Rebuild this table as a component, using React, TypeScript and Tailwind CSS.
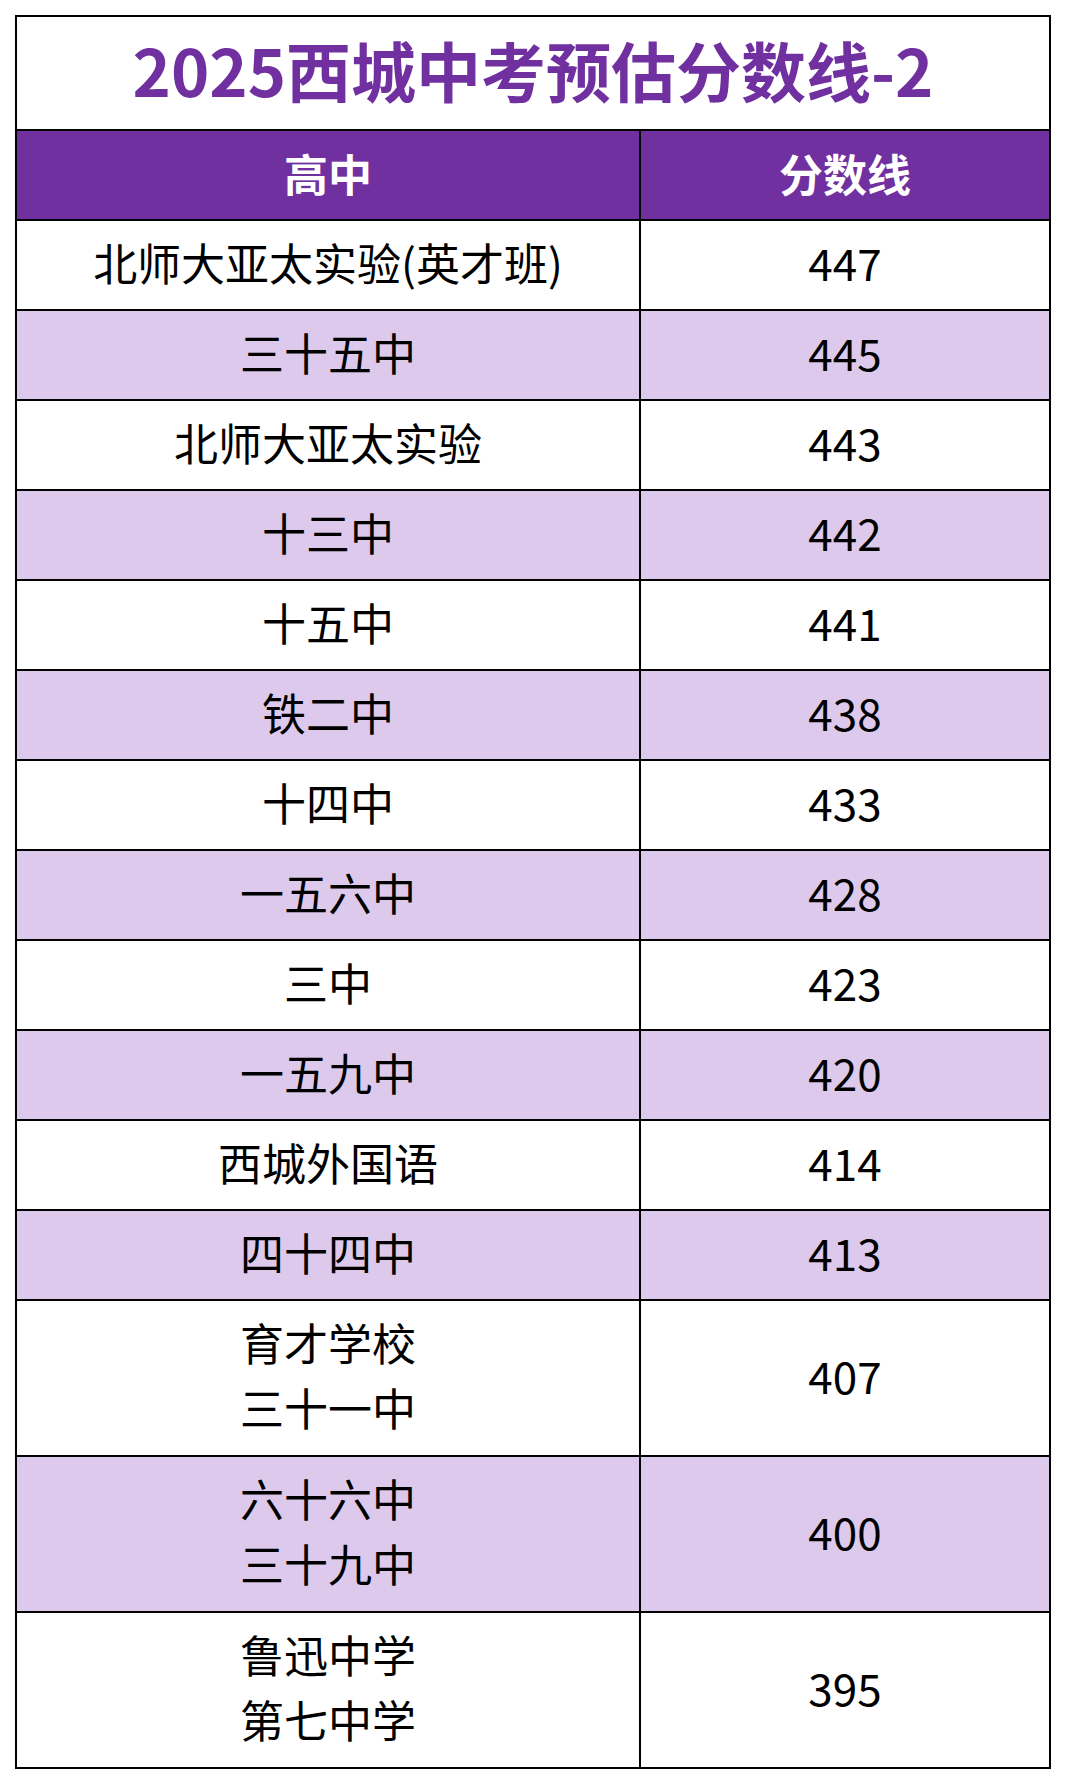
import React from 'react';

type Row = { names: string[]; score: number };

const rows: Row[] = [
  { names: ['北师大亚太实验(英才班)'], score: 447 },
  { names: ['三十五中'], score: 445 },
  { names: ['北师大亚太实验'], score: 443 },
  { names: ['十三中'], score: 442 },
  { names: ['十五中'], score: 441 },
  { names: ['铁二中'], score: 438 },
  { names: ['十四中'], score: 433 },
  { names: ['一五六中'], score: 428 },
  { names: ['三中'], score: 423 },
  { names: ['一五九中'], score: 420 },
  { names: ['西城外国语'], score: 414 },
  { names: ['四十四中'], score: 413 },
  { names: ['育才学校', '三十一中'], score: 407 },
  { names: ['六十六中', '三十九中'], score: 400 },
  { names: ['鲁迅中学', '第七中学'], score: 395 },
];

const App: React.FC = () => {
  return (
    <div className="min-h-[1784px] w-[1066px] bg-white pt-[15px] pl-[15px] font-['Noto_Sans_CJK_SC','Noto_Sans',sans-serif] text-black">
      <div className="w-[1036px] border-2 border-black">
        {/* Title */}
        <div className="flex h-[112px] items-center justify-center pb-[8px]">
          <h1 className="text-[65px] font-bold leading-none text-[#7030A0]">2025西城中考预估分数线-2</h1>
        </div>

        {/* Header */}
        <div className="flex h-[90px] border-t-2 border-black bg-[#7030A0] text-[44px] font-bold leading-none text-white">
          <div className="flex w-[622px] items-center justify-center pb-[4px]">高中</div>
          <div className="flex flex-1 items-center justify-center border-l-2 border-black pb-[4px]">分数线</div>
        </div>

        {/* Rows */}
        {rows.map((row, i) => (
          <div
            key={row.score}
            className={`flex border-t-2 border-black text-[44px] ${row.names.length > 1 ? 'h-[156px]' : 'h-[90px]'} ${i % 2 === 1 ? 'bg-[#DCC9EC]' : 'bg-white'}`}
          >
            <div className="flex w-[622px] flex-col items-center justify-center pb-[6px] leading-[65px]">
              {row.names.map((n) => (
                <span key={n}>{n}</span>
              ))}
            </div>
            <div className="flex flex-1 items-center justify-center border-l-2 border-black pb-[6px] leading-none">
              {row.score}
            </div>
          </div>
        ))}
      </div>
    </div>
  );
};

export default App;
